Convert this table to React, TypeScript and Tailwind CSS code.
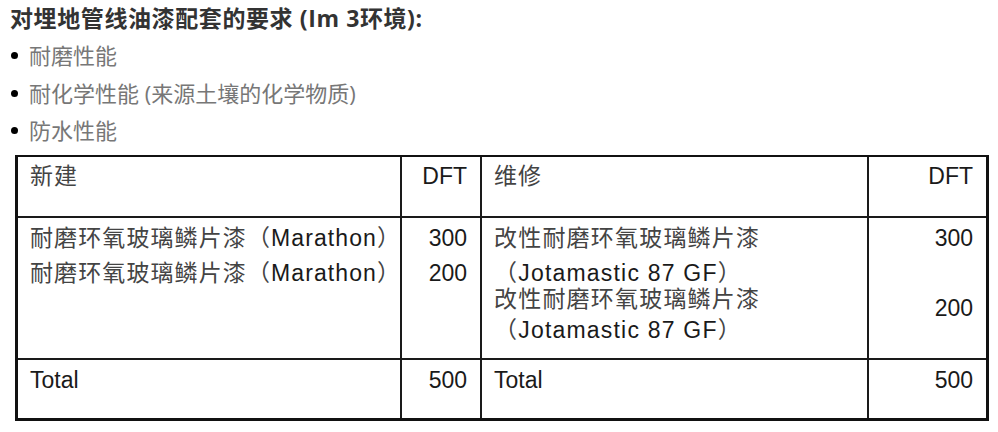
const headFont = { fontFamily: '"Open Sans", "Noto Sans CJK SC", sans-serif' }
const tableFont = { fontFamily: '"Liberation Sans", "Noto Sans CJK SC", sans-serif' }

const bullets = ['耐磨性能', '耐化学性能 (来源土壤的化学物质)', '防水性能']

const App = () => {
  return (
    <div className="w-[998px] h-[432px] bg-white overflow-hidden">
      <h2 style={headFont} className="pl-[10px] text-[23px] leading-[36px] font-bold tracking-[0.6px] text-[#333]">
        对埋地管线油漆配套的要求 (Im 3环境):
      </h2>
      <ul style={headFont} className="mt-[1px]">
        {bullets.map((b) => (
          <li key={b} className="flex items-center h-[37.5px] text-[22px] text-[#777]">
            <span className="ml-[11px] mr-[11px] w-[7px] h-[7px] rounded-full bg-black"></span>
            {b}
          </li>
        ))}
      </ul>

      <div
        style={tableFont}
        className="mt-[5px] ml-[15px] w-[974px] border-t-2 border-l-[3px] border-r-[3px] border-b-[3px] border-[#111] text-[23px] text-[#444]"
      >
        <div className="grid grid-cols-[384px_80px_387px_117px] border-b-2 border-[#1a1a1a] h-[61px]">
          <div className="pl-[12px] pt-[4px] leading-[30px] tracking-[1px] border-r-2 border-[#1a1a1a]">新建</div>
          <div className="pr-[13px] pt-[4px] leading-[30px] text-right border-r-2 border-[#1a1a1a] text-[#1a1a1a]">DFT</div>
          <div className="pl-[12px] pt-[4px] leading-[30px] tracking-[1px] border-r-2 border-[#1a1a1a]">维修</div>
          <div className="pr-[13px] pt-[4px] leading-[30px] text-right text-[#1a1a1a]">DFT</div>
        </div>

        <div className="grid grid-cols-[384px_80px_387px_117px] border-b-2 border-[#1a1a1a] h-[142px]">
          <div className="pl-[12px] pt-[3px] leading-[35px] tracking-[1.1px] border-r-2 border-[#1a1a1a] whitespace-nowrap">
            <div>耐磨环氧玻璃鳞片漆（<span className="text-[#1a1a1a]">Marathon</span>）</div>
            <div>耐磨环氧玻璃鳞片漆（<span className="text-[#1a1a1a]">Marathon</span>）</div>
          </div>
          <div className="pr-[13px] pt-[3px] leading-[35px] text-right border-r-2 border-[#1a1a1a] text-[#1a1a1a]">
            <div>300</div>
            <div>200</div>
          </div>
          <div className="pl-[12px] pt-[3px] tracking-[1.2px] border-r-2 border-[#1a1a1a] whitespace-nowrap">
            <div className="leading-[35px]">
              <div>改性耐磨环氧玻璃鳞片漆</div>
              <div>（<span className="text-[#1a1a1a]">Jotamastic 87 GF</span>）</div>
            </div>
            <div className="leading-[31px] -mt-[7px]">
              <div>改性耐磨环氧玻璃鳞片漆</div>
              <div>（<span className="text-[#1a1a1a]">Jotamastic 87 GF</span>）</div>
            </div>
          </div>
          <div className="pr-[13px] pt-[3px] text-right text-[#1a1a1a]">
            <div className="leading-[35px]">300</div>
            <div className="leading-[31px] mt-[37px]">200</div>
          </div>
        </div>

        <div className="grid grid-cols-[384px_80px_387px_117px] h-[58px] text-[#1a1a1a]">
          <div className="pl-[12px] pt-[5px] leading-[30px] border-r-2 border-[#1a1a1a]">Total</div>
          <div className="pr-[13px] pt-[5px] leading-[30px] text-right border-r-2 border-[#1a1a1a]">500</div>
          <div className="pl-[12px] pt-[5px] leading-[30px] border-r-2 border-[#1a1a1a]">Total</div>
          <div className="pr-[13px] pt-[5px] leading-[30px] text-right">500</div>
        </div>
      </div>
    </div>
  )
}

export default App
